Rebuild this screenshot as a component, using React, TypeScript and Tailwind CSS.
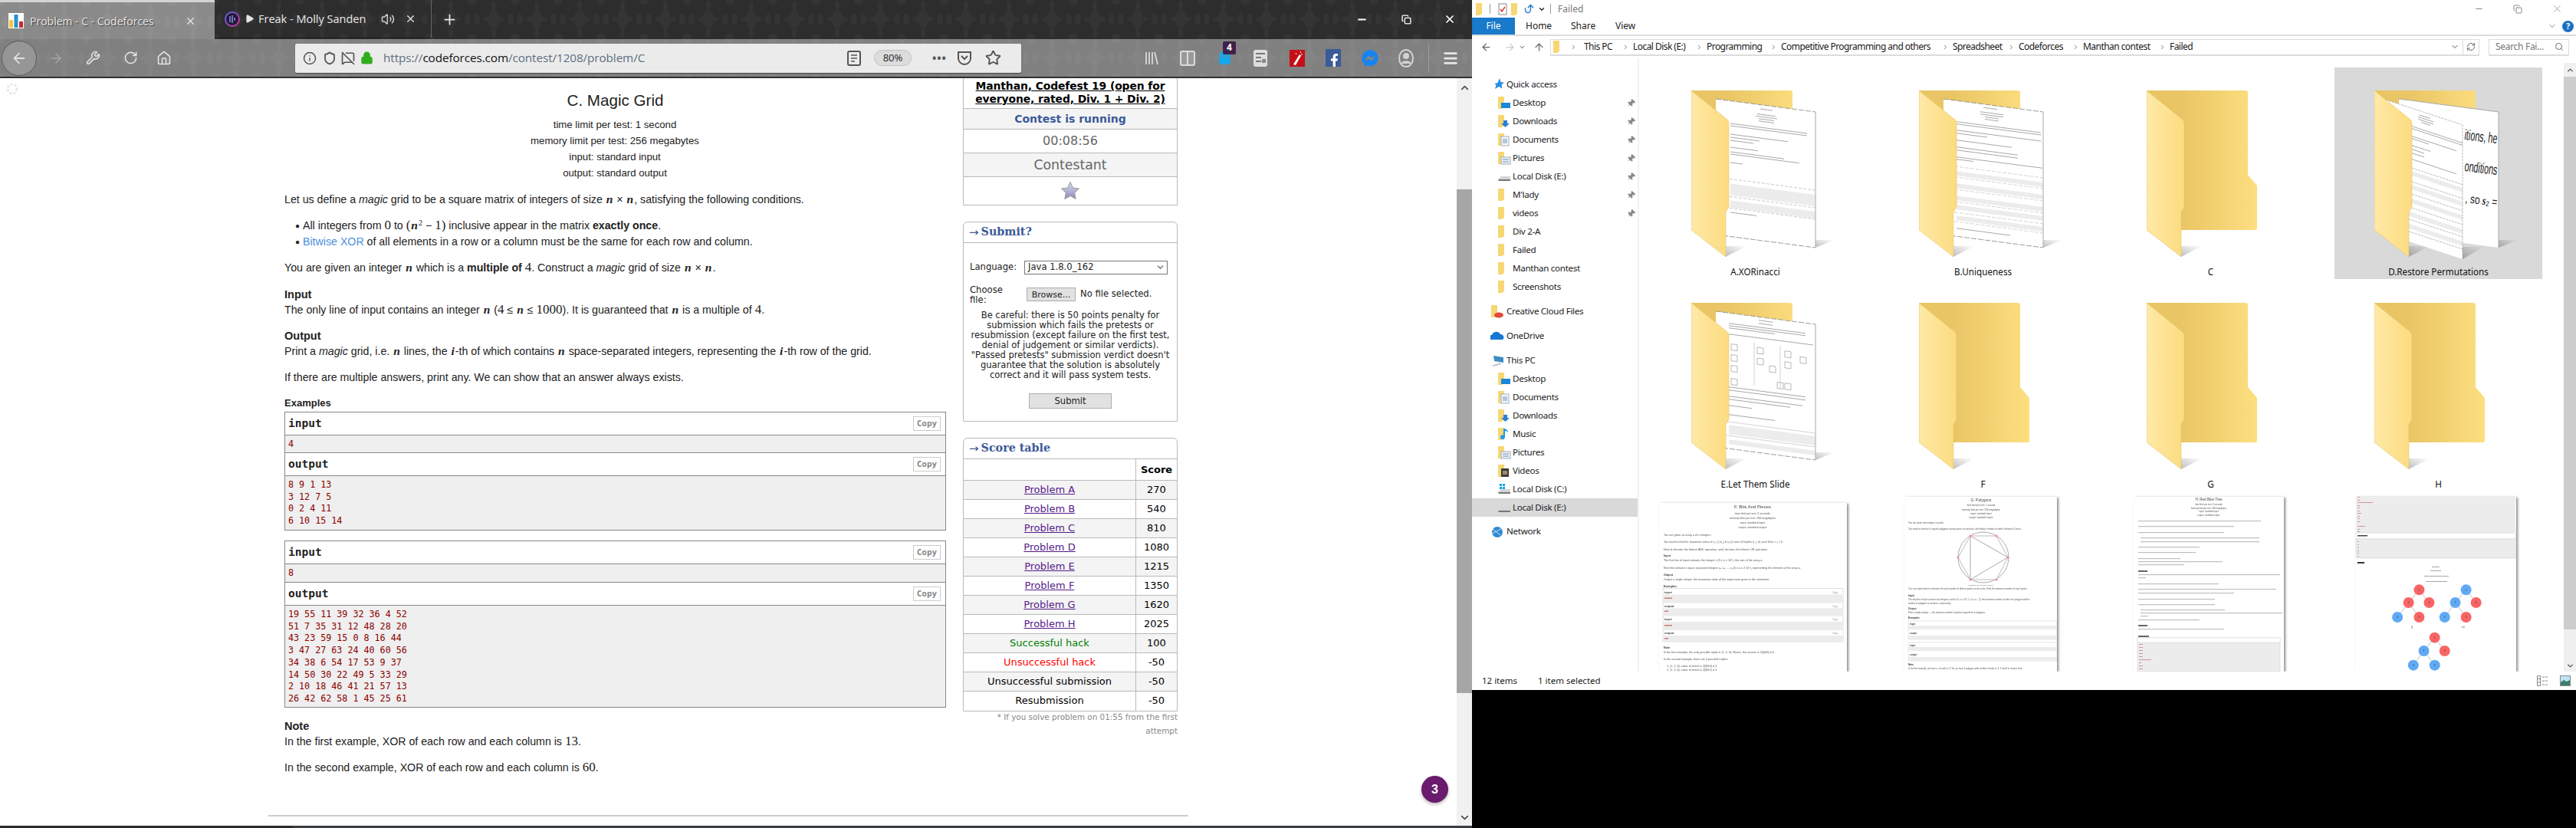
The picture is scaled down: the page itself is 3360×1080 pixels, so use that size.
import React from "react";
import { ArrowLeft, ArrowRight, Wrench, RotateCw, Home, Info, Shield, Lock, Star, Menu, X, Plus, Volume2, Play, ChevronDown, ChevronUp, ChevronRight, Search, RefreshCw, Pin, ArrowUp, Undo2, MessageSquareOff, Minus, Copy } from "lucide-react";
import { FaFacebookF, FaFacebookMessenger, FaGhost } from "react-icons/fa";

const Damask = ({ id, color, op }: { id: string; color: string; op: number }) => (
  <svg className="absolute inset-0 w-full h-full pointer-events-none">
    <defs>
      <pattern id={id} width="56" height="50" patternUnits="userSpaceOnUse">
        <g fill={color} opacity={op}>
          <ellipse cx="28" cy="25" rx="7" ry="12" />
          <ellipse cx="28" cy="25" rx="14" ry="4" />
          <ellipse cx="28" cy="7" rx="3" ry="6" />
          <ellipse cx="28" cy="43" rx="3" ry="6" />
          <ellipse cx="6" cy="25" rx="4" ry="7" />
          <ellipse cx="50" cy="25" rx="4" ry="7" />
          <circle cx="0" cy="0" r="6" />
          <circle cx="56" cy="0" r="6" />
          <circle cx="0" cy="50" r="6" />
          <circle cx="56" cy="50" r="6" />
        </g>
      </pattern>
    </defs>
    <rect width="100%" height="100%" fill={`url(#${id})`} />
  </svg>
);

const Favicon = () => (
  <svg width="20" height="20" viewBox="0 0 20 20" className="shrink-0">
    <rect width="20" height="20" fill="#fff" />
    <rect x="1" y="9" width="5" height="10" fill="#f6c43d" />
    <rect x="7.5" y="2" width="5" height="17" fill="#1a8fd0" />
    <rect x="14" y="11" width="5" height="8" fill="#c8202c" />
  </svg>
);

const Tabs = () => (
  <div className="relative flex h-[51px] bg-[#2d2d2d] shrink-0 font-['Open_Sans'] text-[#e8e8e8]">
    <Damask id="d1" color="#ffffff" op={0.035} />
    <div className="relative flex w-[280px] h-[51px] bg-[#8a8a8a] border-t-[3px] border-[#d4d4d4] items-center pl-[11px]">
      <Damask id="d2" color="#ffffff" op={0.04} />
      <Favicon />
      <span className="relative ml-[8px] w-[202px] text-[14px] whitespace-nowrap [text-shadow:1px_1px_1px_#333]">Problem - C - Codeforces</span>
      <X className="relative" size={15} strokeWidth={2} />
    </div>
    <div className="relative flex w-[283px] h-[50px] border-r border-[#666] border-b border-b-[#1b1b1b] items-center pl-[13px]">
      <svg width="20" height="20" viewBox="0 0 20 20"><defs><linearGradient id="pp" x1="0" y1="0" x2="1" y2="1"><stop offset="0" stopColor="#5a60f0" /><stop offset="1" stopColor="#e0309a" /></linearGradient></defs><circle cx="10" cy="10" r="9" fill="#1c1c2c" stroke="url(#pp)" strokeWidth="2" /><path d="M7 6v8M10 5v10M13 8v4" stroke="#8f7bf2" strokeWidth="1.6" /></svg>
      <Play className="ml-[6px]" size={13} fill="#e6e6e6" strokeWidth={1} />
      <span className="ml-[5px] w-[160px] text-[14.5px] whitespace-nowrap">Freak - Molly Sanden</span>
      <Volume2 size={18} strokeWidth={2} className="text-[#cfcfcf]" />
      <X className="ml-[13px]" size={15} strokeWidth={2} />
    </div>
    <Plus className="relative ml-[13px] mt-[15px]" size={21} strokeWidth={2} />
    <div className="relative ml-auto flex items-center h-[50px] text-white">
      <Minus size={15} strokeWidth={3} />
      <Copy className="ml-[44px]" size={13} strokeWidth={2.4} />
      <X className="ml-[42px] mr-[21px]" size={16} strokeWidth={2.6} />
    </div>
  </div>
);

const I = ({ cls, children }: { cls: string; children: React.ReactNode }) => (
  <span className={`relative flex items-center justify-center w-[24px] h-[24px] shrink-0 ${cls}`}>{children}</span>
);

const Toolbar = () => (
  <div className="relative flex items-center h-[51px] bg-[#808080] border-b-[2px] border-[#303030] shrink-0 font-['Open_Sans']">
    <Damask id="d3" color="#ffffff" op={0.035} />
    <span className="relative flex items-center justify-center ml-[2px] w-[46px] h-[46px] rounded-full border border-[#5c5c5c] bg-[#969696] text-[#dddddd]"><ArrowLeft size={22} strokeWidth={2} /></span>
    <I cls="ml-[13px] text-[#a5a5a5]"><ArrowRight size={20} /></I>
    <I cls="ml-[24px] text-[#e2e2e2]"><Wrench size={19} /></I>
    <I cls="ml-[25px] text-[#e2e2e2]"><RotateCw size={19} /></I>
    <I cls="ml-[20px] text-[#e2e2e2]"><Home size={20} /></I>
    <div className="relative ml-[159px] flex items-center w-[947px] h-[38px] bg-[#ebebeb] rounded-[2px] shadow-[0_1px_1px_#444] text-[#555]">
      <Info className="ml-[10px]" size={18} />
      <Shield className="ml-[8px]" size={18} strokeWidth={2.4} />
      <MessageSquareOff className="ml-[6px]" size={18} strokeWidth={2.2} />
      <Lock className="ml-[7px] text-[#2fae1e]" size={17} fill="#2fae1e" strokeWidth={2.4} />
      <span className="ml-[13px] w-[606px] text-[15.3px] tracking-[-0.1px] whitespace-nowrap text-[#5e6e80]">https://<span className="text-[#111]">codeforces.com</span>/contest/1208/problem/C</span>
      <svg width="18" height="20" viewBox="0 0 18 20" className="ml-[-1px]"><rect x="1" y="1" width="16" height="18" rx="2" fill="none" stroke="#555" strokeWidth="2" /><path d="M5 6h8M5 10h8M5 14h5" stroke="#555" strokeWidth="1.6" /></svg>
      <span className="ml-[17px] flex items-center justify-center w-[49px] h-[21px] rounded-full bg-[#dcdcdc] border border-[#c2c2c2] text-[13px] text-[#222]">80%</span>
      <span className="ml-[27px] text-[#555] text-[14px] font-bold tracking-[1px] w-[28px]">•••</span>
      <svg width="20" height="20" viewBox="0 0 20 20" className="ml-[4px]"><path d="M2 2h16v8a8 8 0 0 1-16 0z" fill="none" stroke="#555" strokeWidth="2" /><path d="M6 7l4 4 4-4" fill="none" stroke="#555" strokeWidth="2" /></svg>
      <Star className="ml-[17px]" size={21} strokeWidth={2.2} />
    </div>
    <I cls="ml-[158px] text-[#d8d8d8]"><svg width="20" height="20" viewBox="0 0 20 20"><path d="M3 2v16M7 2v16M11 2v16M14 2l4 16" stroke="#d8d8d8" strokeWidth="1.8" fill="none" /></svg></I>
    <I cls="ml-[23px]"><svg width="20" height="20" viewBox="0 0 20 20"><rect x="1" y="1" width="18" height="18" rx="2" fill="#9a9a9a" stroke="#dcdcdc" strokeWidth="2" /><path d="M10 1v18" stroke="#dcdcdc" strokeWidth="2" /></svg></I>
    <I cls="ml-[24px] text-[#13a8f0]"><FaGhost size={19} /><span className="absolute left-[10px] top-[-10px] w-[17px] h-[17px] bg-[#40204a] rounded-[2px] text-white text-[12px] font-bold flex items-center justify-center">4</span></I>
    <I cls="ml-[23px]"><svg width="18" height="22" viewBox="0 0 18 22"><rect x="0" y="0" width="18" height="22" rx="3" fill="#dedede" /><path d="M3 5h12M3 10h7M3 15h7" stroke="#777" strokeWidth="2" /><rect x="11" y="12" width="5" height="5" fill="#888" /></svg></I>
    <I cls="ml-[24px]"><svg width="20" height="22" viewBox="0 0 20 22"><rect width="20" height="22" fill="#c50f17" /><path d="M5 19L13 6l2 1.5L8 20z" fill="#fff" /><path d="M14 2l1 2M8 4l1 2M17 6l-2 0" stroke="#fff" /></svg></I>
    <I cls="ml-[23px]"><span className="flex items-end justify-end w-[20px] h-[23px] bg-[#3a5a98] text-white"><FaFacebookF size={17} /></span></I>
    <I cls="ml-[24px] text-[#1783f0]"><FaFacebookMessenger size={22} /></I>
    <I cls="ml-[23px]"><svg width="20" height="24" viewBox="0 0 20 24"><ellipse cx="10" cy="12" rx="9" ry="11" fill="none" stroke="#d2d2d2" strokeWidth="2" /><circle cx="10" cy="9" r="4" fill="#d2d2d2" /><path d="M3 19c2-5 12-5 14 0" fill="#d2d2d2" /></svg></I>
    <span className="relative ml-[17px] w-px h-[38px] bg-[#9c9c9c]" />
    <I cls="ml-[16px] text-[#e6e6e6]"><Menu size={22} strokeWidth={3} /></I>
  </div>
);

const M = ({ children, cls = "" }: { children: React.ReactNode; cls?: string }) => (
  <span className={`font-['Liberation_Serif'] italic font-bold text-[15.5px] leading-[0] mx-[1px] ${cls}`}>{children}</span>
);
const D = ({ children }: { children: React.ReactNode }) => <span className="font-['Liberation_Serif'] text-[17px] leading-[0] font-medium">{children}</span>;

const Copybtn = () => (
  <span className="ml-auto mr-[6px] flex items-center justify-center w-[36px] h-[19px] border border-[#ccc] text-[11px] text-[#888] font-['DejaVu_Sans_Mono']">Copy</span>
);
const SHead = ({ t }: { t: string }) => (
  <div className="flex items-center h-[30px] pl-[4px] border-b border-[#888] font-['DejaVu_Sans_Mono'] font-bold text-[14.5px] text-[#222]">
    {t}
    <Copybtn />
  </div>
);
const SBody = ({ lines, cls }: { lines: string[]; cls: string }) => (
  <div className={`bg-[#efefef] pl-[4px] pt-[4px] font-['DejaVu_Sans_Mono'] text-[11.7px] leading-[15.7px] text-[#8b0000] whitespace-pre ${cls}`}>
    {lines.map((l) => (
      <div key={l}>{l}</div>
    ))}
  </div>
);

const Statement = () => (
  <div className="w-[863px] pt-[14px] font-['Liberation_Sans'] text-[14.2px] leading-[21px] text-[#222]">
    <div className="h-[30px] leading-[30px] text-center text-[20.6px]">C. Magic Grid</div>
    <div className="mt-[6px] text-center ml-[-1px] text-[13.2px]">
      <div>time limit per test: 1 second</div>
      <div>memory limit per test: 256 megabytes</div>
      <div>input: standard input</div>
      <div>output: standard output</div>
    </div>
    <p className="mt-[14px]">Let us define a <i>magic</i> grid to be a square matrix of integers of size <M>n</M> × <M>n</M>, satisfying the following conditions.</p>
    <ul className="mt-[13px] ml-[14px]">
      <li className="flex"><span className="w-[10px] text-[10px]">●</span><span>All integers from <D>0</D> to <D>(</D><M>n</M><sup className="font-['Liberation_Serif'] text-[10px] leading-[0]">2</sup> − <D>1)</D> inclusive appear in the matrix <b>exactly once</b>.</span></li>
      <li className="flex"><span className="w-[10px] text-[10px]">●</span><span><span className="text-[#4d8fdc]">Bitwise XOR</span> of all elements in a row or a column must be the same for each row and column.</span></li>
    </ul>
    <p className="mt-[13px]">You are given an integer <M>n</M> which is a <b>multiple of <D>4</D></b>. Construct a <i>magic</i> grid of size <M>n</M> × <M>n</M>.</p>
    <h4 className="mt-[14px] h-[20px] leading-[20px] font-bold text-[14.5px]">Input</h4>
    <p>The only line of input contains an integer <M>n</M> (<D>4</D> ≤ <M>n</M> ≤ <D>1000</D>). It is guaranteed that <M>n</M> is a multiple of <D>4</D>.</p>
    <h4 className="mt-[13px] h-[20px] leading-[20px] font-bold text-[14.5px]">Output</h4>
    <p>Print a <i>magic</i> grid, i.e. <M>n</M> lines, the <M>i</M>-th of which contains <M>n</M> space-separated integers, representing the <M>i</M>-th row of the grid.</p>
    <p className="mt-[13px]">If there are multiple answers, print any. We can show that an answer always exists.</p>
    <div className="mt-[14px] h-[18px] leading-[18px] font-bold text-[13px]">Examples</div>
    <div className="mt-[2px] border border-[#888]">
      <SHead t="input" />
      <SBody lines={["4"]} cls="h-[23px] border-b border-[#888]" />
      <SHead t="output" />
      <SBody lines={["8 9 1 13", "3 12 7 5", "0 2 4 11", "6 10 15 14"]} cls="h-[70px]" />
    </div>
    <div className="mt-[13px] border border-[#888]">
      <SHead t="input" />
      <SBody lines={["8"]} cls="h-[24px] border-b border-[#888]" />
      <SHead t="output" />
      <SBody lines={["19 55 11 39 32 36 4 52", "51 7 35 31 12 48 28 20", "43 23 59 15 0 8 16 44", "3 47 27 63 24 40 60 56", "34 38 6 54 17 53 9 37", "14 50 30 22 49 5 33 29", "2 10 18 46 41 21 57 13", "26 42 62 58 1 45 25 61"]} cls="h-[132px]" />
    </div>
    <h4 className="mt-[14px] h-[20px] leading-[20px] font-bold text-[14.5px]">Note</h4>
    <p>In the first example, XOR of each row and each column is <D>13</D>.</p>
    <p className="mt-[13px]">In the second example, XOR of each row and each column is <D>60</D>.</p>
  </div>
);

const Cap = ({ t }: { t: string }) => (
  <div className="flex items-center h-[27px] pl-[7px] border-b border-[#b9b9b9] text-[#3b5998]">
    <span className="text-[15px] font-['DejaVu_Sans']">→</span>
    <span className="ml-[3px] font-['DejaVu_Serif'] font-bold text-[14.3px]">{t}</span>
  </div>
);

const scores: [string, string, string][] = [
  ["Problem A", "270", "link"], ["Problem B", "540", "link"], ["Problem C", "810", "link"], ["Problem D", "1080", "link"],
  ["Problem E", "1215", "link"], ["Problem F", "1350", "link"], ["Problem G", "1620", "link"], ["Problem H", "2025", "link"],
  ["Successful hack", "100", "text-[#008000]"], ["Unsuccessful hack", "-50", "text-[#ff0000]"], ["Unsuccessful submission", "-50", "text-black"], ["Resubmission", "-50", "text-black"],
];

const Sidebar = () => (
  <div className="ml-[22px] w-[280px] font-['DejaVu_Sans'] text-[#222] shrink-0">
    <div className="border border-t-0 border-[#b9b9b9] text-center">
      <div className="pt-[2px] pb-[3px] border-b border-[#b9b9b9] font-bold text-[13.9px] tracking-[-0.1px] leading-[17px] text-black underline whitespace-nowrap">Manthan, Codefest 19 (open for<br />everyone, rated, Div. 1 + Div. 2)</div>
      <div className="h-[27px] leading-[26px] border-b border-[#b9b9b9] bg-[#f4f4f4] font-bold text-[14px] text-[#3b5998]">Contest is running</div>
      <div className="h-[31px] leading-[30px] border-b border-[#b9b9b9] text-[16px] text-[#666]">00:08:56</div>
      <div className="h-[31px] leading-[30px] border-b border-[#b9b9b9] bg-[#f4f4f4] text-[17.3px] text-[#666]">Contestant</div>
      <div className="h-[36px] flex items-center justify-center">
        <svg width="26" height="26" viewBox="0 0 26 26"><defs><linearGradient id="st" x1="0" y1="0" x2="0" y2="1"><stop offset="0" stopColor="#d8d8ec" /><stop offset="1" stopColor="#8d8dbb" /></linearGradient></defs><path d="M13 1.5l3.5 7.5 8 1-5.8 5.5 1.5 8L13 19.5 5.8 23.5l1.5-8L1.5 10l8-1z" fill="url(#st)" stroke="#9a9a9a" /></svg>
      </div>
    </div>
    <div className="mt-[21px] border border-[#b9b9b9] rounded-t-[6px] text-[11.6px]">
      <Cap t="Submit?" />
      <div className="px-[8px] pt-[23px] pb-[16px]">
        <div className="flex items-center h-[17px]">
          <span className="w-[71px] shrink-0">Language:</span>
          <span className="flex items-center justify-between w-[187px] h-[18px] border border-[#777] pl-[4px] pr-[2px]">Java 1.8.0_162<ChevronDown size={13} className="text-[#555]" /></span>
        </div>
        <div className="flex mt-[15px] h-[26px] leading-[13px]">
          <span className="w-[74px] shrink-0">Choose<br />file:</span>
          <span className="flex items-center justify-center w-[64px] h-[18px] mt-[3px] bg-[#e1e1e1] border border-[#adadad] text-[11px]">Browse...</span>
          <span className="ml-[6px] mt-[5px]">No file selected.</span>
        </div>
        <div className="mt-[7px] text-center text-[11.5px] leading-[13px] mx-[-6px] whitespace-nowrap">
          Be careful: there is 50 points penalty for<br />submission which fails the pretests or<br />resubmission (except failure on the first test,<br />denial of judgement or similar verdicts).<br />"Passed pretests" submission verdict doesn't<br />guarantee that the solution is absolutely<br />correct and it will pass system tests.
        </div>
        <div className="mt-[17px] mx-auto w-[108px] h-[20px] leading-[18px] bg-[#e1e1e1] border border-[#adadad] text-center">Submit</div>
      </div>
    </div>
    <div className="mt-[21px] border border-[#b9b9b9] rounded-t-[6px] text-[13px]">
      <Cap t="Score table" />
      <div className="grid grid-cols-[225px_1fr] text-center">
        <div className="h-[28px] border-b border-r border-[#b9b9b9]" />
        <div className="h-[28px] leading-[27px] border-b border-[#b9b9b9] font-bold text-black">Score</div>
        {scores.map(([a, b, c], i) => (
          <React.Fragment key={a}>
            <div className={`h-[25px] leading-[24px] border-r border-[#b9b9b9] ${i < 11 ? "border-b" : ""} ${i % 2 === 0 ? "bg-[#f4f4f4]" : ""}`}>
              <span className={c === "link" ? "text-[#551a8b] underline" : c}>{a}</span>
            </div>
            <div className={`h-[25px] leading-[24px] border-[#b9b9b9] text-black ${i < 11 ? "border-b" : ""} ${i % 2 === 0 ? "bg-[#f4f4f4]" : ""}`}>{b}</div>
          </React.Fragment>
        ))}
      </div>
    </div>
    <div className="text-right text-[10.4px] leading-[17.5px] text-[#888] pl-[20px] mt-[-1px]">* If you solve problem on 01:55 from the first<br />attempt</div>
  </div>
);

const Browser = () => (
  <section className="flex flex-col w-[1920px] h-[1080px] bg-white shrink-0">
    <Tabs />
    <Toolbar />
    <div className="relative flex flex-1 min-h-0">
      <svg width="18" height="18" viewBox="0 0 18 18" className="absolute left-[7px] top-[5px]"><circle cx="9" cy="9" r="6" fill="none" stroke="#e8e8e8" strokeWidth="3" strokeDasharray="3 2" /></svg>
      <div className="w-[1900px] flex flex-col">
        <div className="flex h-[961px] pl-[371px]">
          <Statement />
          <Sidebar />
        </div>
        <div className="ml-[350px] w-[1200px] h-[2px] bg-[#cccccc]" />
      </div>
      <div className="w-[20px] flex flex-col bg-[#f1f1f1]">
        <div className="h-[145px] flex justify-center pt-[5px]"><ChevronUp size={15} strokeWidth={3} className="text-[#555]" /></div>
        <div className="h-[657px] bg-[#a6a6a6]" />
        <div className="flex-1 flex items-end justify-center pb-[3px]"><ChevronDown size={15} strokeWidth={3} className="text-[#555]" /></div>
      </div>
      <span className="absolute left-[1854px] top-[910px] flex items-center justify-center w-[35px] h-[35px] rounded-full bg-[#6a1b6d] text-white text-[16px] font-bold font-['Liberation_Sans'] shadow-[0_2px_4px_rgba(0,0,0,.3)]">3</span>
    </div>
    <div className="flex h-[3px] shrink-0"><div className="w-[382px] bg-[#2b2b2b]" /><div className="flex-1 bg-[#3a3f44]" /></div>
  </section>
);

/* ---------- Explorer ---------- */
const SmallF = ({ kind }: { kind: string }) => {
  const f = (
    <path d="M1 1h8v14l-3 2H1z" fill="#f7d774" />
  );
  return (
    <svg width="18" height="18" viewBox="0 0 18 18" className="shrink-0">
      {kind === "qa" && <path d="M12 1l1.5 5 4.5.5-3.5 3 1 5-4.5-2.5-5 3 1.5-5-2-2 4-1z" fill="#2b8fe0" />}
      {kind === "od" && <path d="M1 14a3 3 0 0 1 1-6 6 6 0 0 1 11-1 4 4 0 0 1 3 7z" fill="#1478d4" />}
      {kind === "pc" && <g><path d="M4 3l13 2v7L5 10z" fill="#3f8dc4" /><path d="M1 16l11-4 3 2-10 3z" fill="#c9ced3" /></g>}
      {kind === "net" && <g><circle cx="9" cy="10" r="7" fill="#2e8ad0" /><path d="M3 6l10 8M1 13l14-8" stroke="#cde7f8" /></g>}
      {(kind === "drive" || kind === "c") && <g><path d="M1 13l4-4h12v4l-1 2H2z" fill="#d4d4d4" /><path d="M1 13h16v2H2z" fill="#777" />{kind === "c" && <path d="M3 2h3v3H3zM7 2h3v3H7zM3 6h3v3H3zM7 6h3v3H7z" fill="#16a0e8" />}</g>}
      {["f", "desk", "dl", "doc", "pic", "mus", "vid", "cc"].includes(kind) && f}
      {kind === "desk" && <rect x="5" y="9" width="12" height="7" fill="#1b87dc" />}
      {kind === "dl" && <path d="M8 8h5v4h3l-5.5 5L5 12h3z" fill="#2b80d8" />}
      {kind === "doc" && <g><rect x="5" y="5" width="10" height="12" fill="#f4f6f8" stroke="#9fb2c4" /><path d="M7 9h6M7 11h6M7 13h6" stroke="#6e9ac0" /></g>}
      {kind === "pic" && <g><rect x="5" y="8" width="12" height="9" fill="#f2f4f6" stroke="#a0a8ae" /><path d="M7 14h8M7 11h8" stroke="#5a8cc0" /></g>}
      {kind === "mus" && <path d="M10 2v11a3 3 0 1 1-2-2.6V2c3 0 6 2 6 5-1-1-2-2-4-2z" fill="#1f9be8" />}
      {kind === "vid" && <g><rect x="5" y="6" width="10" height="11" fill="#3c3c3c" /><rect x="7" y="9" width="6" height="5" fill="#a08c6c" /></g>}
      {kind === "cc" && <ellipse cx="11" cy="14" rx="6" ry="3.5" fill="#e24a3b" />}
    </svg>
  );
};

const NavI = ({ t, k, lvl = 1, pin = false, sel = false, cls = "" }: { t: string; k: string; lvl?: number; pin?: boolean; sel?: boolean; cls?: string }) => (
  <div className={`flex items-center h-[24px] w-[216px] ${lvl === 1 ? "pl-[33px]" : "pl-[24px]"} ${sel ? "bg-[#d9d9d9]" : ""} ${cls}`}>
    <SmallF kind={k} />
    <span className={lvl === 1 ? "ml-[2px]" : "ml-[3px]"}>{t}</span>
    {pin && <Pin className="ml-auto mr-[3px] text-[#888] rotate-45" size={11} fill="#888" />}
  </div>
);

const Nav = () => (
  <div className="w-[218px] pt-[22px] border-r-2 border-[#f3f3f3] shrink-0 text-[11.6px] text-[#1b1b1b] tracking-[-0.3px]">
    <NavI t="Quick access" k="qa" lvl={0} />
    <NavI t="Desktop" k="desk" pin />
    <NavI t="Downloads" k="dl" pin />
    <NavI t="Documents" k="doc" pin />
    <NavI t="Pictures" k="pic" pin />
    <NavI t="Local Disk (E:)" k="drive" pin />
    <NavI t="M'lady" k="f" pin />
    <NavI t="videos" k="f" pin />
    <NavI t="Div 2-A" k="f" />
    <NavI t="Failed" k="f" />
    <NavI t="Manthan contest" k="f" />
    <NavI t="Screenshots" k="f" />
    <NavI t="Creative Cloud Files" k="cc" lvl={0} cls="mt-[8px]" />
    <NavI t="OneDrive" k="od" lvl={0} cls="mt-[8px]" />
    <NavI t="This PC" k="pc" lvl={0} cls="mt-[8px]" />
    <NavI t="Desktop" k="desk" />
    <NavI t="Documents" k="doc" />
    <NavI t="Downloads" k="dl" />
    <NavI t="Music" k="mus" />
    <NavI t="Pictures" k="pic" />
    <NavI t="Videos" k="vid" />
    <NavI t="Local Disk (C:)" k="c" />
    <NavI t="Local Disk (E:)" k="drive" sel />
    <NavI t="Network" k="net" lvl={0} cls="mt-[7px]" />
  </div>
);

const G = "#8a8a8a";
const Ls = ({ rows, x = 0, c = G, h = 1 }: { rows: [number, number, number?][]; x?: number; c?: string; h?: number }) => (
  <g fill={c}>
    {rows.map(([y, w, xx], i) => (
      <rect key={i} x={xx ?? x} y={y} width={w} height={h} opacity="0.75" />
    ))}
  </g>
);

const PaperA = () => (
  <g>
    <Ls rows={[[5, 16, 58], [12, 24, 54], [15, 28, 52], [18, 20, 56], [21, 20, 56], [29, 100, 19], [32, 100, 19], [43, 75, 19], [47, 38, 19], [51, 30, 19], [60, 36, 19], [66, 70, 19], [69, 90, 19], [80, 16, 19], [145, 34, 19]]} />
    <rect x="19" y="108" width="111" height="15" fill="#ececec" />
    <rect x="19" y="130" width="111" height="9" fill="#ececec" />
    <path d="M0 102H130M0 125H130M0 140H130" stroke="#aaa" strokeDasharray="4 2" strokeWidth=".6" />
  </g>
);
const PaperB = () => (
  <g>
    <Ls rows={[[4, 18, 52], [10, 30, 48], [13, 30, 48], [16, 18, 54], [19, 18, 54], [27, 110, 17], [30, 110, 17], [38, 110, 17], [42, 40, 17], [51, 72, 17], [60, 80, 17], [64, 80, 17], [73, 112, 17], [76, 22, 17], [166, 70, 17]]} />
    {[92, 108, 124, 136, 150].map((y) => <rect key={y} x="17" y={y} width="113" height="6" fill="#ececec" />)}
    <path d="M0 86H130M0 100H130M0 116H130M0 132H130M0 146H130M0 158H130" stroke="#bbb" strokeDasharray="5 2" strokeWidth=".6" />
  </g>
);
const PaperE = () => (
  <g>
    <Ls rows={[[4, 18, 56], [8, 18, 56], [13, 100, 17], [16, 100, 17], [19, 60, 17], [27, 110, 17], [96, 100, 17], [100, 100, 17], [108, 96, 17], [112, 80, 17], [120, 30, 17], [132, 60, 17]]} />
    {[[20, 40], [20, 54], [20, 68], [54, 40], [54, 54], [90, 40], [90, 54], [20, 85], [70, 62], [80, 82], [90, 82], [110, 45]].map(([x, y], i) => <rect key={i} x={x} y={y} width="8" height="8" fill="none" stroke="#777" strokeWidth=".5" />)}
    <rect x="17" y="146" width="113" height="12" fill="#ececec" />
    <path d="M50 34v56M84 34v56M0 142H130M0 160H130" stroke="#aaa" strokeWidth=".5" />
    <rect x="17" y="165" width="113" height="6" fill="#ececec" />
  </g>
);

const Folder = ({ kind }: { kind?: string }) => (
  <svg width="190" height="225" viewBox="0 0 190 225" className="block">
    <defs>
      <linearGradient id="fb" x1="0" y1="0" x2="1" y2="0"><stop offset="0.3" stopColor="#e9c565" /><stop offset="1" stopColor="#fddf80" /></linearGradient>
      <linearGradient id="ff" x1="0" y1="0" x2="1" y2="0"><stop offset="0" stopColor="#fee8a4" /><stop offset="1" stopColor="#fcdc80" /></linearGradient>
      <linearGradient id="sh" x1="0" y1="1" x2="1" y2="0"><stop offset="0" stopColor="#00000040" /><stop offset="1" stopColor="#00000000" /></linearGradient>
    </defs>
    <path d="M45 217L72 203H45z" fill="url(#sh)" />
    <path d="M0 0H129q3 0 3 3V110L144 124V180q0 2-2 2H0z" fill="url(#fb)" />
    {(kind === "A" || kind === "B" || kind === "E") && (
      <g>
        <path d="M162 205L187 195H162z" fill="url(#sh)" />
        <g transform="translate(32 11) skewY(7.45)">
          <rect width="130" height="177" fill="#fff" />
          {kind === "A" && <PaperA />}
          {kind === "B" && <PaperB />}
          {kind === "E" && <PaperE />}
          <path d="M0 0H130" stroke="#888" strokeDasharray="7 2" strokeWidth=".8" />
          <path d="M130 0V177" stroke="#aaa" strokeWidth="1" />
          <path d="M0 177H130" stroke="#888" strokeDasharray="7 2" strokeWidth=".8" />
        </g>
      </g>
    )}
    {kind === "D" && (
      <g>
        <path d="M162 205L187 195H162z" fill="url(#sh)" />
        <path d="M115 220L143 204H115z" fill="url(#sh)" />
        <g transform="translate(32 11) skewY(7.45)">
          <rect width="130" height="177" fill="#fff" />
          <path d="M0 0H130V177" fill="none" stroke="#aaa" />
        </g>
        <g fontFamily="Liberation Sans" fontSize="19" fill="#222">
          <text x="117" y="64" textLength="43" lengthAdjust="spacingAndGlyphs" transform="rotate(7 117 64)">itions, he</text>
          <text x="117" y="105" textLength="43" lengthAdjust="spacingAndGlyphs" transform="rotate(7 117 105)">onditions</text>
          <text x="118" y="146" fontSize="16" textLength="42" lengthAdjust="spacingAndGlyphs" transform="rotate(7 118 146)">, so <tspan fontStyle="italic" fontFamily="Liberation Serif" fontWeight="bold">s</tspan>₂ =</text>
        </g>
        <g transform="translate(15 12) skewY(18.2)">
          <rect width="100" height="175" fill="#fff" />
          <Ls rows={[[5, 14, 44], [8, 20, 42], [11, 20, 42], [14, 12, 46], [23, 68, 32], [26, 68, 32], [36, 60, 32], [39, 24, 32], [48, 26, 32], [53, 18, 32], [58, 18, 32], [66, 60, 32]]} />
          {[82, 100, 118, 136, 152].map((y) => <rect key={y} x="30" y={y} width="70" height="6" fill="#ececec" />)}
          <path d="M0 0H100M100 0V175M30 78H100M30 96H100M30 112H100M30 130H100M30 146H100M30 162H100" stroke="#999" strokeDasharray="3 1" strokeWidth=".6" fill="none" />
        </g>
      </g>
    )}
    <path d="M0 0L47 38q2 2 2 5V152L45 159V217L0 182z" fill="url(#ff)" stroke="#e0bd62" strokeWidth=".5" />
    <path d="M3 4V180M6 7V182" stroke="#fdeeb8" strokeWidth=".7" />
  </svg>
);

const Tile = ({ label, kind, sel }: { label: string; kind?: string; sel?: boolean }) => (
  <div className={`flex flex-col items-center h-[276px] pt-[30px] ${sel ? "bg-[#d9d9d9]" : ""}`}>
    <div className="w-[271px] pl-[52px]"><Folder kind={kind} /></div>
    <div className="mt-[2px] text-[11.7px] leading-[18px] text-[#111]">{label}</div>
  </div>
);

const TT = ({ x, y, t, s = 3.2, c = "#555", b = false }: { x: number; y: number; t: string; s?: number; c?: string; b?: boolean }) => (
  <text x={x} y={y} fontSize={s} fill={c} textAnchor="middle" fontFamily="Liberation Sans" fontWeight={b ? 700 : 400}>{t}</text>
);
const TL = ({ x, y, t, s = 3.7, c = "#555", b = false }: { x: number; y: number; t: string; s?: number; c?: string; b?: boolean }) => (
  <text x={x} y={y} fontSize={s} fill={c} fontFamily="Liberation Sans" fontWeight={b ? 700 : 400}>{t}</text>
);

const ThumbF = () => (
  <svg width="245" height="220" viewBox="0 0 245 220" className="block ml-[10px] mt-[14px] bg-white shadow-[2px_1px_3px_rgba(0,0,0,.45)] blur-[0.35px]">
    <TT x={122} y={7} t="F. Bits And Pieces" s={6} c="#444" />
    <TT x={122} y={15} t="time limit per test: 2 seconds" s={3.6} />
    <TT x={122} y={21} t="memory limit per test: 256 megabytes" s={3.6} />
    <TT x={122} y={27} t="input: standard input" s={3.6} />
    <TT x={122} y={33} t="output: standard output" s={3.6} />
    <TL x={6} y={43} t="You are given an array a of n integers." />
    <TL x={6} y={52} t="You need to find the maximum value of a_i | (a_j & a_k) over all triplets (i, j, k) such that i < j < k." />
    <TL x={6} y={62} t="Here & denotes the bitwise AND operation, and | denotes the bitwise OR operation." />
    <TL x={6} y={70} t="Input" b c="#333" />
    <TL x={6} y={76} t="The first line of input contains the integer n (3 ≤ n ≤ 10⁶), the size of the array a." />
    <TL x={6} y={86} t="Next line contains n space separated integers a₁, a₂, ..., aₙ (0 ≤ aᵢ ≤ 2·10⁶), representing the elements of the array a." s={3.5} />
    <TL x={6} y={95} t="Output" b c="#333" />
    <TL x={6} y={101} t="Output a single integer, the maximum value of the expression given in the statement." />
    <TL x={6} y={110} t="Examples" b c="#333" />
    {[111.5, 147].map((y) => (
      <g key={y}>
        <rect x="5" y={y} width="235" height="34" fill="#fff" stroke="#ccc" strokeWidth=".6" />
        <rect x="5" y={y + 8} width="235" height="11" fill="#ececec" />
        <rect x="5" y={y + 26} width="235" height="8" fill="#ececec" />
        <TL x={7} y={y + 6} t="input" b c="#444" s={4} />
        <TL x={7} y={y + 24} t="output" b c="#444" s={4} />
        <TL x={226} y={y + 6} t="Copy" s={3} c="#999" />
        <TL x={226} y={y + 24} t="Copy" s={3} c="#999" />
        <rect x="7" y={y + 12} width="10" height="1.5" fill="#c97a7a" />
        <rect x="7" y={y + 29} width="5" height="1.5" fill="#c97a7a" />
      </g>
    ))}
    <TL x={6} y={190} t="Note" b c="#333" />
    <TL x={6} y={196} t="In the first example, the only possible triplet is (1, 2, 3). Hence, the answer is 2|(4&6) = 6." />
    <TL x={6} y={205} t="In the second example, there are 4 possible triplets:" />
    <TL x={10} y={214} t="1. (1, 2, 3), value of which is 2|(8&4) = 2." />
    <TL x={10} y={219} t="2. (1, 2, 4), value of which is 2|(8&7) = 2." />
  </svg>
);

const ThumbG = () => (
  <svg width="199" height="228" viewBox="0 0 199 228" className="block ml-[33px] mt-[6px] bg-white shadow-[2px_1px_3px_rgba(0,0,0,.45)] blur-[0.35px]">
    <TT x={100} y={6} t="G. Polygons" s={5} c="#444" />
    <TT x={100} y={12} t="time limit per test: 1 second" s={3} />
    <TT x={100} y={18} t="memory limit per test: 256 megabytes" s={3} />
    <TT x={100} y={23} t="input: standard input" s={3} />
    <TT x={100} y={28} t="output: standard output" s={3} />
    <TL x={5} y={35} t="You are given two integers n and k." s={3} />
    <TL x={5} y={43} t="You need to construct k regular polygons having same circumcircle, with distinct number of sides l between 3 and n." s={2.9} />
    <circle cx="103" cy="79" r="33" fill="none" stroke="#aaa" />
    <path d="M86 51L120 51L135 79L120 108L86 108L70 79Z" fill="none" stroke="#bbb" />
    <path d="M86 51L135 79L86 108Z" fill="none" stroke="#aaa" />
    {[[86, 51], [120, 51], [135, 79], [120, 108], [86, 108], [70, 79]].map(([x, y]) => <circle key={x * y} cx={x} cy={y} r="1.5" fill="#f58a8a" />)}
    <TT x={100} y={116} t="Illustration for the first example." s={2.4} />
    <TL x={5} y={121} t="You can rotate them to minimize the total number of distinct points on the circle. Find the minimum number of such points." s={2.9} />
    <TL x={5} y={130} t="Input" b c="#333" s={3.2} />
    <TL x={5} y={135} t="The only line of input contains two integers n and k (3 ≤ n ≤ 10⁶, 1 ≤ k ≤ n − 2), the maximum number of sides of a polygon and the" s={2.75} />
    <TL x={5} y={140} t="number of polygons to construct, respectively." s={2.75} />
    <TL x={5} y={147} t="Output" b c="#333" s={3.2} />
    <TL x={5} y={152} t="Print a single integer — the minimum number of points required for k polygons." s={2.9} />
    <TL x={5} y={159} t="Examples" b c="#333" s={3.2} />
    {[162, 190].map((y) => (
      <g key={y}>
        <rect x="5" y={y} width="194" height="24" fill="#fff" stroke="#ccc" strokeWidth=".5" />
        <rect x="5" y={y + 6} width="194" height="5" fill="#ececec" />
        <rect x="5" y={y + 19} width="194" height="5" fill="#ececec" />
        <TL x={7} y={y + 4.5} t="input" b c="#444" s={3} />
        <TL x={7} y={y + 17} t="output" b c="#444" s={3} />
      </g>
    ))}
    <TL x={5} y={220} t="Note" b c="#333" s={3.2} />
    <TL x={5} y={225} t="In the first example, we have n = 6 and k = 2. So, we have 4 polygons with number of sides 3, 4, 5 and 6 to choose from." s={2.8} />
  </svg>
);

const ThumbH = () => (
  <svg width="196" height="228" viewBox="0 0 196 228" className="block ml-[35px] mt-[6px] bg-white shadow-[2px_1px_3px_rgba(0,0,0,.45)] blur-[0.35px]">
    <TT x={98} y={5} t="H. Red Blue Tree" s={4.6} c="#444" />
    <TT x={98} y={11} t="time limit per test: 3 seconds" s={2.8} />
    <TT x={98} y={16} t="memory limit per test: 256 megabytes" s={2.8} />
    <TT x={98} y={20} t="input: standard input" s={2.8} />
    <TT x={98} y={25} t="output: standard output" s={2.8} />
    <Ls x={6} c="#aaa" h={1.2} rows={[[31, 160], [38, 125], [46, 112], [53, 155, 9], [58, 155, 9], [65, 80], [72, 75], [80, 55], [84, 110], [88, 60], [101, 185], [105, 10], [113, 105], [120, 180], [125, 125], [133, 100], [140, 100], [147, 110, 9], [151, 185, 9], [155, 10, 9], [160, 80], [172, 112]]} />
    <Ls x={6} c="#333" h={2} rows={[[96, 12], [167, 12], [181, 14]]} />
    <rect x="5" y="184" width="186" height="44" fill="#ececec" stroke="#ccc" strokeWidth=".5" />
    <rect x="5" y="184" width="186" height="6" fill="#fff" stroke="#ccc" strokeWidth=".5" />
    <Ls x={7} c="#c07a7a" rows={[[192, 5], [196, 5], [200, 5], [204, 5], [208, 5], [212, 16], [216, 3], [220, 5], [224, 5]]} />
  </svg>
);

const nodes: [number, number, string, string][] = [
  [1033, 388, "r", "1"], [997, 438, "r", "2"], [1067, 438, "r", "3"], [959, 495, "b", "4"], [1033, 495, "r", "5"],
  [1193, 388, "b", "1"], [1156, 438, "b", "2"], [1227, 438, "r", "3"], [1120, 495, "b", "4"], [1193, 495, "r", "5"],
  [1086, 575, "r", "1"], [1049, 627, "b", "2"], [1120, 627, "r", "3"], [1013, 683, "b", "4"], [1086, 683, "b", "5"],
];
const nx = (z: number) => (z - 815) / 2.613;
const ny = (z: number) => (z - 24) / 3;
const edges = [[0, 1], [0, 2], [1, 3], [1, 4], [5, 6], [5, 7], [6, 8], [6, 9], [10, 11], [10, 12], [11, 13], [11, 14]];

const ThumbI = () => (
  <svg width="210" height="228" viewBox="0 0 210 228" className="block ml-[27px] mt-[6px] bg-white shadow-[2px_1px_3px_rgba(0,0,0,.45)] blur-[0.35px]">
    <rect x="1" y="0" width="208" height="47" fill="#ececec" />
    <rect x="1" y="47" width="208" height="8" fill="#fff" stroke="#ccc" strokeWidth=".5" />
    <rect x="1" y="55" width="208" height="25" fill="#ececec" stroke="#ccc" strokeWidth=".5" />
    <Ls x={3} c="#c07a7a" rows={[[0, 3], [4, 3], [7, 20], [11, 3], [14, 3], [18, 3], [21, 5], [25, 3], [28, 3], [32, 3], [38, 10], [42, 3], [45, 3], [58, 2], [62, 2], [66, 2], [70, 2], [73, 2], [77, 2]]} />
    <rect x="3" y="50" width="13" height="1.5" fill="#444" />
    <rect x="3" y="85" width="9" height="2" fill="#333" />
    <Ls c="#888" rows={[[91, 10, 100], [96, 14, 98], [103, 32, 90], [110, 28, 92]]} />
    {edges.map(([a, b]) => (
      <line key={a * 100 + b} x1={nx(nodes[a][0])} y1={ny(nodes[a][1])} x2={nx(nodes[b][0])} y2={ny(nodes[b][1])} stroke="#ddd" strokeWidth="1.5" />
    ))}
    {nodes.map(([x, y, c, t], i) => (
      <g key={i}>
        <circle cx={nx(x)} cy={ny(y)} r="7" fill={c === "r" ? "#f96464" : "#5fa9f5"} />
        <TT x={nx(x)} y={ny(y) + 1.2} t={t} s={3.4} c="#333" />
      </g>
    ))}
    <TT x={74} y={171} t="(i)" s={3} />
    <TT x={141} y={171} t="(ii)" s={3} />
  </svg>
);

const crumbs: [string, string][] = [
  ["This PC", "w-[64px]"], ["Local Disk (E:)", "w-[96px]"], ["Programming", "w-[97px]"], ["Competitive Programming and others", "w-[224px]"],
  ["Spreadsheet", "w-[86px]"], ["Codeforces", "w-[84px]"], ["Manthan contest", "w-[113px]"], ["Failed", "w-[40px]"],
];

const Explorer = () => (
  <section className="flex flex-col w-[1440px] h-[900px] bg-white shrink-0 font-['Noto_Sans'] text-[12px] text-[#1b1b1b]">
    <div className="flex items-center h-[23px] pl-[4px] shrink-0">
      <SmallF kind="f" />
      <span className="ml-[1px] w-px h-[13px] bg-[#999]" />
      <svg width="14" height="16" viewBox="0 0 14 16" className="ml-[9px]"><rect x="2" y="1" width="10" height="14" fill="#fff" stroke="#888" /><path d="M4 8l2 3 4-6" stroke="#d33" fill="none" strokeWidth="1.4" /></svg>
      <span className="ml-[3px]"><SmallF kind="f" /></span>
      <Undo2 size={15} className="ml-[-1px] text-[#2b7cd3] rotate-90" strokeWidth={2.4} />
      <ChevronDown size={10} className="ml-[4px]" strokeWidth={3} />
      <span className="ml-[6px] w-px h-[13px] bg-[#999]" />
      <span className="ml-[9px] text-[#777]">Failed</span>
      <Minus size={13} className="ml-auto text-[#888]" />
      <Copy size={12} className="ml-[38px] text-[#888]" />
      <X size={15} className="ml-[38px] mr-[17px] text-[#888]" strokeWidth={1.2} />
    </div>
    <div className="flex items-center h-[24px] border-b-2 border-[#dcdcdc] shrink-0">
      <span className="flex items-center justify-center w-[56px] h-[22px] bg-[#1979ca] text-white">File</span>
      <span className="ml-[14px] w-[59px]">Home</span>
      <span className="w-[58px]">Share</span>
      <span>View</span>
      <ChevronDown size={12} className="ml-auto text-[#888]" />
      <span className="ml-[7px] mr-[3px] flex items-center justify-center w-[15px] h-[15px] rounded-full bg-[#1a6fc4] text-white font-bold text-[11px]">?</span>
    </div>
    <div className="flex items-center h-[29px] shrink-0">
      <ArrowLeft size={15} className="ml-[11px] text-[#666]" />
      <ArrowRight size={15} className="ml-[16px] text-[#ccc]" />
      <ChevronDown size={9} className="ml-[4px] text-[#888]" strokeWidth={3} />
      <ArrowUp size={15} className="ml-[10px] text-[#666]" />
      <div className="ml-[7px] flex items-center w-[1212px] h-[22px] border border-b-2 border-[#dcdcdc] pl-[2px] tracking-[-0.55px]">
        <SmallF kind="f" />
        <ChevronRight size={9} className="ml-[5px] mr-[9px] text-[#555]" />
        {crumbs.map(([t, w], i) => (
          <span key={t} className={`flex items-center justify-between whitespace-nowrap pr-[5px] ${w}`}>
            {t}
            {i < 7 && <ChevronRight size={9} className="text-[#555]" />}
          </span>
        ))}
        <ChevronDown size={12} className="ml-auto text-[#555]" />
        <span className="ml-[4px] flex items-center justify-center w-[21px] h-full border-l border-[#dcdcdc]"><RefreshCw size={12} className="text-[#666]" /></span>
      </div>
      <div className="ml-[12px] flex items-center justify-between w-[105px] h-[22px] border border-b-2 border-[#dcdcdc] pl-[8px] pr-[6px] text-[#777] tracking-[-0.3px]">Search Fai...<Search size={12} className="text-[#666]" /></div>
    </div>
    <div className="flex flex-1 min-h-0">
      <Nav />
      <div className="w-[1206px] pl-[16px] pt-[12px] overflow-hidden">
        <div className="grid grid-cols-[repeat(4,271px)] auto-rows-[276px] gap-x-[26px] gap-y-px">
          <Tile label="A.XORinacci" kind="A" />
          <Tile label="B.Uniqueness" kind="B" />
          <Tile label="C" />
          <Tile label="D.Restore Permutations" kind="D" sel />
          <Tile label="E.Let Them Slide" kind="E" />
          <Tile label="F" />
          <Tile label="G" />
          <Tile label="H" />
          <ThumbF />
          <ThumbG />
          <ThumbH />
          <ThumbI />
        </div>
      </div>
      <div className="w-[16px] mt-[6px] flex flex-col bg-[#f0f0f0]">
        <div className="h-[18px] flex items-center justify-center"><ChevronUp size={11} strokeWidth={3} className="text-[#555]" /></div>
        <div className="h-[721px] bg-[#cdcdcd]" />
        <div className="flex-1 flex items-end justify-center pb-[2px]"><ChevronDown size={11} strokeWidth={3} className="text-[#555]" /></div>
      </div>
    </div>
    <div className="flex items-center h-[24px] shrink-0 pl-[13px] text-[11.5px]">
      <span className="w-[73px]">12 items</span>
      <span>1 item selected</span>
      <svg width="16" height="14" viewBox="0 0 16 14" className="ml-auto"><path d="M.5.5h4v13h-4zM.5 4.5h4M.5 9h4" fill="#fff" stroke="#888" /><path d="M7 2h8M7 7h8M7 12h8" stroke="#888" strokeDasharray="3 1" /></svg>
      <svg width="14" height="14" viewBox="0 0 14 14" className="ml-[14px] mr-[7px]"><rect x=".5" y=".5" width="13" height="13" fill="#bfe3f5" stroke="#888" /><path d="M1 9l4-3 4 2 4-2v7H1z" fill="#3d7d6e" /></svg>
    </div>
  </section>
);

export default function App() {
  return (
    <div className="flex items-start w-[3360px] h-[1080px] bg-black overflow-hidden">
      <Browser />
      <Explorer />
    </div>
  );
}
